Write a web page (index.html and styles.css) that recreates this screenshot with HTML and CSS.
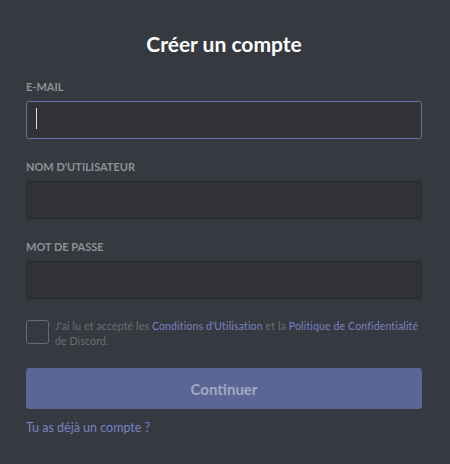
FILE: index.html
```html
<!DOCTYPE html>
<html lang="fr">
<head>
    <meta charset="UTF-8">
    <title>Créer un compte</title>
    <link rel="stylesheet" href="styles.css">
</head>
<body>
    <form class="register">
        <h1>Créer un compte</h1>

        <div class="field">
            <label for="email">E-mail</label>
            <div class="input focused"><span class="caret"></span></div>
        </div>

        <div class="field">
            <label for="username">Nom d'utilisateur</label>
            <div class="input"></div>
        </div>

        <div class="field">
            <label for="password">Mot de passe</label>
            <div class="input"></div>
        </div>

        <div class="terms">
            <span class="checkbox"></span>
            <p>J'ai lu et accepté les <a href="#">Conditions d'Utilisation</a> et la <a href="#">Politique de Confidentialité</a> de Discord.</p>
        </div>

        <button type="button" class="submit">Continuer</button>

        <a href="#" class="login-link">Tu as déjà un compte ?</a>
    </form>
</body>
</html>
```

FILE: styles.css
```css
html, body {
    margin: 0;
    padding: 0;
    background-color: #36393f;
}
body {
    font-family: Lato, "Open Sans", sans-serif;
    color: #dcddde;
}
.register {
    width: 396px;
    padding: 29px 28px 0 26px;
}
h1 {
    margin: 0 0 20px;
    text-align: center;
    font-size: 21px;
    line-height: 30px;
    font-weight: 700;
    color: #fff;
}
.field {
    margin-bottom: 20px;
}
.field label {
    display: block;
    font-size: 11px;
    line-height: 16px;
    font-weight: 700;
    text-transform: uppercase;
    color: #8e9297;
    margin-bottom: 6px;
}
.input {
    box-sizing: border-box;
    height: 38px;
    background-color: #303238;
    border: 1px solid #27292d;
    border-radius: 3px;
    padding: 6px 9px;
}
.input.focused {
    border-color: #6670a6;
}
.caret {
    display: block;
    width: 1px;
    height: 21px;
    background-color: #dcddde;
}
.terms {
    display: flex;
    gap: 6px;
    margin-top: 3px;
}
.checkbox {
    flex: none;
    box-sizing: border-box;
    width: 23px;
    height: 24px;
    border: 1px solid #686b72;
    border-radius: 3px;
    margin-top: 1px;
}
.terms p {
    margin: 0;
    font-size: 10.5px;
    line-height: 15px;
    letter-spacing: 0.15px;
    color: #6b6f76;
}
.terms a {
    color: #7983c4;
    text-decoration: none;
}
.submit {
    display: block;
    width: 100%;
    height: 41px;
    margin-top: 19px;
    border: none;
    border-radius: 3px;
    background-color: #5a6696;
    color: #a2a9c3;
    font-family: inherit;
    font-size: 15px;
    font-weight: 700;
}
.login-link {
    display: inline-block;
    margin-top: 11px;
    font-size: 12.5px;
    line-height: 16px;
    color: #7983c4;
    text-decoration: none;
}
```
